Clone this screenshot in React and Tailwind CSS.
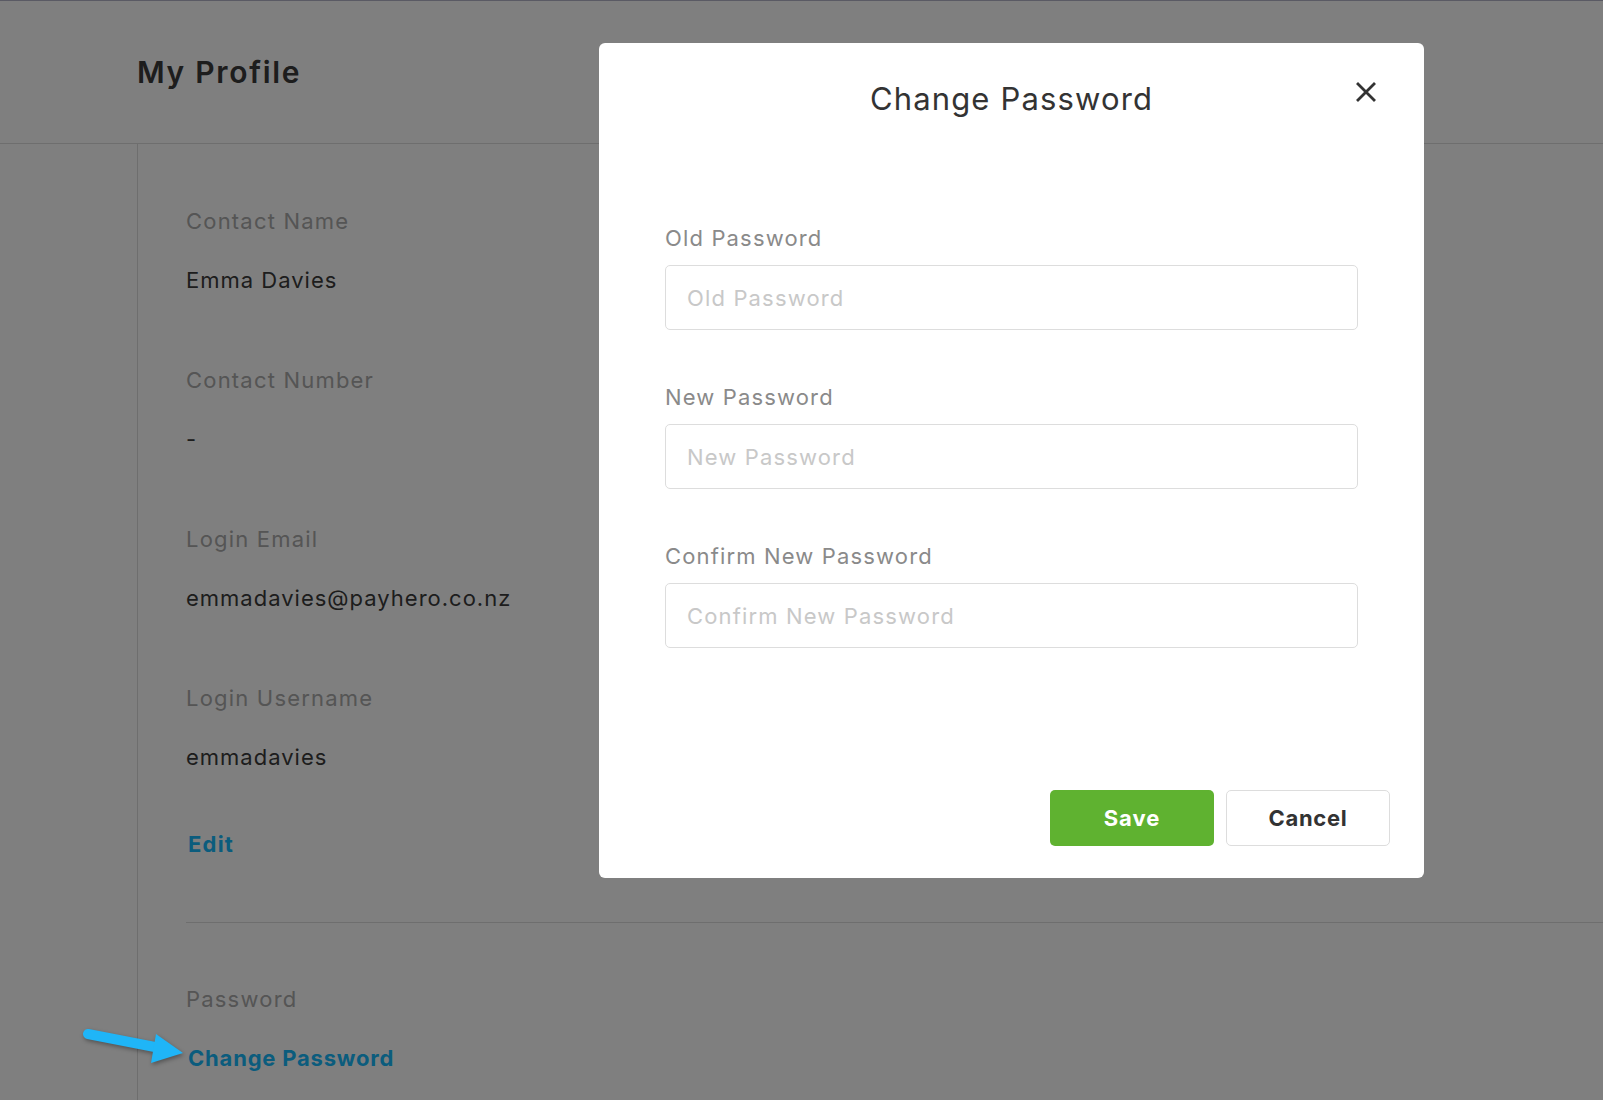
import React from "react";

function Field({ label, value, last }) {
  return (
    <div className={last ? "" : "mb-[70px]"}>
      <div className="h-[30px] text-[22px] leading-[30px] tracking-[1.2px] text-[#aaaaaa]">{label}</div>
      <div className="mt-[29px] h-[30px] text-[22px] leading-[30px] tracking-[1px] text-[#3a3a3a]">{value}</div>
    </div>
  );
}

function ModalField({ label, first }) {
  return (
    <div className={first ? "mt-[104px]" : "mt-[52px]"}>
      <div className="h-[30px] text-[22px] leading-[30px] tracking-[1.15px] text-[#8a8a8a]">{label}</div>
      <input
        type="password"
        placeholder={label}
        className="mt-[12px] block h-[65px] w-full rounded-[5px] border border-[#dddddd] bg-white pl-[21px] text-[22px] tracking-[1.15px] text-[#333] outline-none placeholder:text-[#c8c8c8]"
      />
    </div>
  );
}

export default function App() {
  return (
    <div className="relative h-[1100px] w-full overflow-hidden bg-white font-[Inter,sans-serif]">
      <div className="h-px bg-[#b4b4c8]" />
      <header className="flex h-[143px] items-center border-b border-[#dcdcdc] pl-[137px]">
        <h1 className="text-[30px] font-semibold tracking-[1.7px] text-[#3a3a3a]">My Profile</h1>
      </header>
      <div className="flex">
        <div className="h-[957px] w-[138px] shrink-0 border-r border-[#dcdcdc]" />
        <div className="flex-1 pl-[48px] pt-[62px]">
          <Field label="Contact Name" value="Emma Davies" />
          <Field label="Contact Number" value="-" />
          <Field label="Login Email" value="emmadavies@payhero.co.nz" />
          <Field label="Login Username" value="emmadavies" last />
          <div className="mt-[57px] h-[30px] pl-[2px] text-[22px] font-bold leading-[30px] tracking-[1.2px] text-[#16b9fa]">Edit</div>
          <div className="mt-[63px] h-px bg-[#dcdcdc]" />
          <div className="mt-[61px] h-[30px] text-[22px] leading-[30px] tracking-[1.2px] text-[#aaaaaa]">Password</div>
          <div className="mt-[29px] h-[30px] pl-[2px] text-[22px] font-bold leading-[30px] tracking-[0.8px] text-[#16b9fa]">Change Password</div>
        </div>
      </div>

      {/* dim overlay */}
      <div className="absolute inset-0 bg-[rgba(0,0,0,0.5)]" />

      {/* modal */}
      <div className="absolute left-[599px] top-[43px] flex h-[835px] w-[825px] flex-col rounded-[6px] bg-white">
        <h2 className="pt-[36px] text-center text-[31px] font-normal leading-[40px] tracking-[1.15px] text-[#333333]">Change Password</h2>
        <button className="absolute right-[48px] top-[39px] h-[20px] w-[20px]" aria-label="Close">
          <svg width="20" height="20" viewBox="0 0 20 20">
            <path d="M2 2 L18 18 M18 2 L2 18" stroke="#333333" strokeWidth="2.8" strokeLinecap="square" fill="none" />
          </svg>
        </button>
        <div className="px-[66px]">
          <ModalField label="Old Password" first />
          <ModalField label="New Password" />
          <ModalField label="Confirm New Password" />
        </div>
        <div className="mt-auto flex justify-end gap-[12px] pb-[32px] pr-[34px]">
          <button className="h-[56px] w-[164px] rounded-[5px] bg-[#5fb230] text-[22px] font-bold tracking-[1px] text-white">Save</button>
          <button className="h-[56px] w-[164px] rounded-[5px] border border-[#dddddd] bg-white text-[22px] font-bold tracking-[0.7px] text-[#333333]">Cancel</button>
        </div>
      </div>

      {/* annotation arrow */}
      <svg
        className="absolute left-[70px] top-[1020px] drop-shadow-[1px_2px_2px_rgba(0,0,0,0.35)]"
        width="120"
        height="56"
        viewBox="70 1020 120 56"
      >
        <line x1="88" y1="1034" x2="160" y2="1048" stroke="#1fb5f7" strokeWidth="10" strokeLinecap="round" />
        <polygon points="183,1053 156,1034 151,1063" fill="#1fb5f7" />
      </svg>
    </div>
  );
}
